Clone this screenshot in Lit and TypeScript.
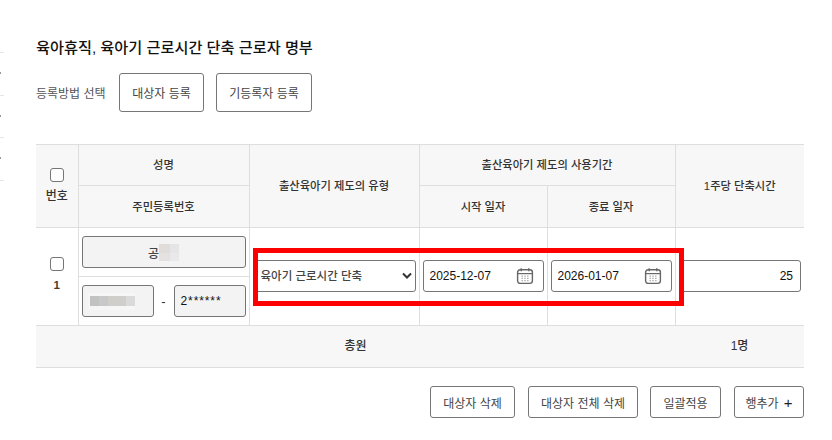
import { LitElement, html, css } from "lit";
import { customElement } from "lit/decorators.js";

const cal = html`<svg class="cal" width="18" height="18" viewBox="0 0 18 18" fill="none">
  <rect x="1.6" y="2.8" width="14.8" height="13.6" rx="2.6" stroke="#666" stroke-width="1.4"/>
  <path d="M2 6.6H16" stroke="#666" stroke-width="1.2"/>
  <path d="M5.2 1.2V4.2M12.8 1.2V4.2" stroke="#666" stroke-width="1.4"/>
  <path d="M5.5 9.2H12.5M5.5 11.4H12.5M5.5 13.6H12.5" stroke="#aaa" stroke-width="1.2" stroke-dasharray="1.4 1.4"/>
</svg>`;

@customElement("app-root")
export class AppRoot extends LitElement {
  static styles = css`
    :host {
      display: block;
      width: 832px;
      height: 440px;
      overflow: hidden;
      background: #fff;
      position: relative;
      font-family: "Liberation Sans", "Noto Sans CJK KR", sans-serif;
      font-size: 12px;
      color: #333;
    }
    .ticks {
      position: absolute;
      left: 0;
      top: 52px;
      width: 4px;
      display: flex;
      flex-direction: column;
    }
    .ticks i {
      display: block;
      position: relative;
      height: 1px;
      background: #e6e6e6;
      margin-bottom: 41.67px;
    }
    .ticks i.dot::after {
      content: "";
      position: absolute;
      left: 0;
      top: 20px;
      width: 1px;
      height: 2px;
      background: #999;
    }
    .page {
      padding: 39px 28px 0 36px;
    }
    h1 {
      margin: 0;
      height: 17px;
      line-height: 17px;
      font-size: 15.2px;
      font-weight: 500;
      color: #111;
    }
    .method {
      display: flex;
      align-items: center;
      margin-top: 17px;
      height: 39px;
      color: #555;
    }
    .method span {
      width: 83px;
    }
    button {
      font: inherit;
      color: #444;
      background: #fff;
      border: 1px solid #767676;
      border-radius: 3px;
      padding: 0;
    }
    .method button {
      height: 39px;
    }
    .b1 { width: 85px; margin-right: 12px; }
    .b2 { width: 96px; }
    table {
      margin-top: 32px;
      width: 768px;
      table-layout: fixed;
      border-collapse: collapse;
    }
    th, td {
      border: 1px solid #dedede;
      padding: 0;
      text-align: center;
      font-weight: 500;
    }
    tr > :first-child { border-left: 0; }
    tr > :last-child { border-right: 0; }
    th {
      background: #f7f7f7;
      color: #333;
      height: 41px;
      font-size: 11.3px;
      padding-bottom: 2px;
      box-sizing: border-box;
    }
    tr.h2 th { height: 42px; }
    th.first { font-size: 12px; padding-bottom: 2px; }
    .chk {
      display: block;
      width: 14px;
      height: 14px;
      margin: 0 auto 4px;
      border: 1px solid #767676;
      border-radius: 3px;
      background: #fff;
      box-sizing: border-box;
    }
    .body-row td { height: 97px; box-sizing: border-box; padding-bottom: 2px; }
    .body-row td.stackcell { padding-bottom: 0; }
    .body-row td.num { font-weight: 700; color: #4a3a2a; font-size: 11.5px; padding-bottom: 6px; }
    td.num .chk { margin-bottom: 8px; }
    .stack { display: flex; flex-direction: column; height: 97px; }
    .stack > div { flex: 1; display: flex; align-items: center; }
    .stack > .name {
      border-bottom: 1px solid #dedede;
      justify-content: center;
      height: 48px;
      flex: none;
      padding: 0 3px;
    }
    .stack > .id { padding: 0 3px; }
    .field {
      box-sizing: border-box;
      height: 32px;
      border: 1px solid #767676;
      border-radius: 3px;
      display: flex;
      align-items: center;
      background: #fff;
      color: #111;
    }
    .ro { background: #f3f3f3; }
    .fullname { width: 100%; justify-content: center; color: #444; }
    .m1 {
      display: block;
      width: 20px;
      height: 17px;
      background:
        linear-gradient(180deg, rgba(255,255,255,0) 0 50%, rgba(255,255,255,.15) 50%),
        linear-gradient(90deg, #dfdcda 0 55%, #e5e5e7 55%);
    }
    .m2wrap {
      display: flex;
      align-items: center;
      width: 47px;
      height: 17px;
      margin-left: 5px;
      padding-left: 2px;
      box-sizing: border-box;
      background: #f6f6f6;
    }
    .m2 {
      display: block;
      width: 45px;
      height: 10px;
      background: linear-gradient(90deg, #c2c2c2 0 9px, #c8c8c8 9px 18px, #d0ceca 18px 36px, #dadada 36px);
    }
    .idl { width: 72px; }
    .dash { width: 20px; text-align: center; color: #333; font-size: 13px; }
    .idr { width: 72px; padding-left: 6px; letter-spacing: 0.9px; }
    select {
      display: block;
      box-sizing: border-box;
      width: 162px;
      height: 32px;
      margin: 0 0 0 4px;
      border: 1px solid #767676;
      border-radius: 3px;
      appearance: none;
      -webkit-appearance: none;
      background: #fff url("data:image/svg+xml,%3Csvg xmlns='http://www.w3.org/2000/svg' width='10' height='8' viewBox='0 0 10 8'%3E%3Cpath d='M1 1.5L5 5.5L9 1.5' fill='none' stroke='%23333' stroke-width='2'/%3E%3C/svg%3E") no-repeat right 3px center;
      font: inherit;
      font-size: 11.5px;
      color: #444;
      padding: 0 0 0 6px;
    }
    .date {
      justify-content: space-between;
      padding: 0 9px 0 6px;
      width: 121px;
      margin: 0 auto;
    }
    .cal { display: block; }
    .num-f {
      justify-content: flex-end;
      padding-right: 7px;
      margin: 0 3px 0 4px;
    }
    .total td {
      height: 42px;
      box-sizing: border-box;
      padding-bottom: 4px;
      background: #f7f7f7;
      border-left: 0;
      border-right: 0;
    }
    .actions {
      display: flex;
      justify-content: flex-end;
      margin-top: 18px;
    }
    .actions button { height: 32px; }
    .a1 { width: 85px; margin-right: 13px; }
    .a2 { width: 110px; margin-right: 12px; }
    .a3 { width: 71px; margin-right: 13px; }
    .a4 { width: 70px; }
    .plus { font-size: 15px; line-height: 1; margin-left: 2px; color: #222; }
    .mark {
      position: absolute;
      left: 253px;
      top: 248px;
      width: 431px;
      height: 58px;
      box-sizing: border-box;
      border: 5px solid #ff0000;
      pointer-events: none;
    }
  `;

  render() {
    return html`
      <div class="ticks">
        <i class="dot"></i><i class="dot"></i><i class="dot"></i><i></i>
      </div>
      <div class="page">
        <h1>육아휴직, 육아기 근로시간 단축 근로자 명부</h1>
        <div class="method">
          <span>등록방법 선택</span>
          <button class="b1">대상자 등록</button>
          <button class="b2">기등록자 등록</button>
        </div>
        <table>
          <colgroup>
            <col style="width:42px" />
            <col style="width:171px" />
            <col style="width:170px" />
            <col style="width:128px" />
            <col style="width:128px" />
            <col />
          </colgroup>
          <tr>
            <th class="first" rowspan="2"><span class="chk"></span>번호</th>
            <th>성명</th>
            <th rowspan="2">출산육아기 제도의 유형</th>
            <th colspan="2">출산육아기 제도의 사용기간</th>
            <th rowspan="2">1주당 단축시간</th>
          </tr>
          <tr class="h2">
            <th>주민등록번호</th>
            <th>시작 일자</th>
            <th>종료 일자</th>
          </tr>
          <tr class="body-row">
            <td class="num"><span class="chk"></span>1</td>
            <td class="stackcell">
              <div class="stack">
                <div class="name">
                  <div class="field ro fullname">공<span class="m1"></span></div>
                </div>
                <div class="id">
                  <div class="field ro idl"><span class="m2wrap"><span class="m2"></span></span></div>
                  <span class="dash">-</span>
                  <div class="field ro idr">2******</div>
                </div>
              </div>
            </td>
            <td>
              <select><option>육아기 근로시간 단축</option></select>
            </td>
            <td><div class="field date">2025-12-07${cal}</div></td>
            <td><div class="field date">2026-01-07${cal}</div></td>
            <td><div class="field num-f">25</div></td>
          </tr>
          <tr class="total">
            <td colspan="5">총원</td>
            <td>1명</td>
          </tr>
        </table>
        <div class="actions">
          <button class="a1">대상자 삭제</button>
          <button class="a2">대상자 전체 삭제</button>
          <button class="a3">일괄적용</button>
          <button class="a4">행추가 <span class="plus">+</span></button>
        </div>
      </div>
      <div class="mark"></div>
    `;
  }
}
